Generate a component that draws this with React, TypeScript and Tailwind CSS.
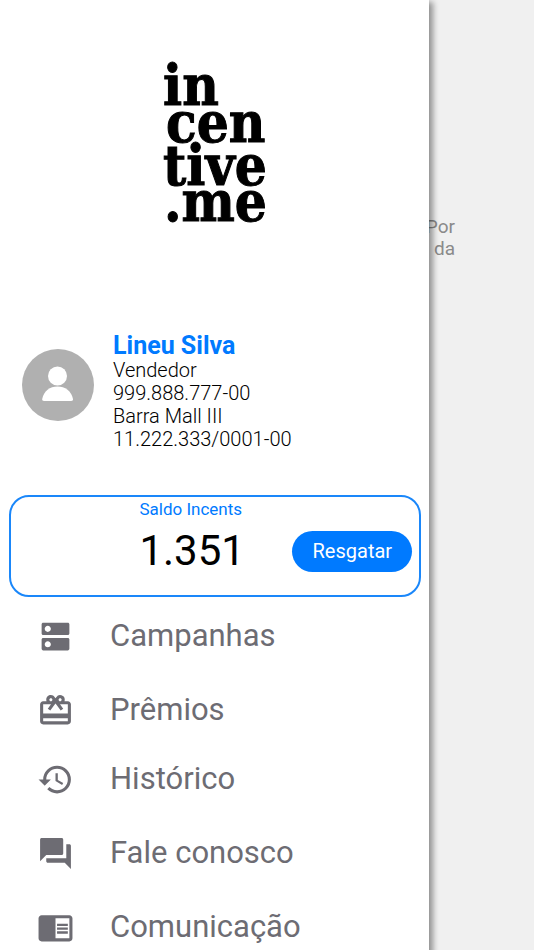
import type { IconType } from 'react-icons'
import { MdChromeReaderMode, MdDns, MdForum, MdHistory, MdRedeem } from 'react-icons/md'

interface MenuItem {
  label: string;
  icon: IconType;
}

const menuGroups: MenuItem[][] = [
  [
    { label: 'Campanhas', icon: MdDns },
    { label: 'Prêmios', icon: MdRedeem },
  ],
  [
    { label: 'Histórico', icon: MdHistory },
    { label: 'Fale conosco', icon: MdForum },
    { label: 'Comunicação', icon: MdChromeReaderMode },
  ],
]

function Logo() {
  return (
    <svg
      viewBox="0 0 104 164"
      role="img"
      aria-label="incentive.me"
      stroke="#000"
      strokeWidth="1"
      className="mx-auto h-[164px] w-[104px] overflow-visible font-['DejaVu_Serif_Condensed','DejaVu_Serif',serif] text-[56px] font-bold"
    >
      <text x="0" y="45">in</text>
      <text x="3" y="82">cen</text>
      <text x="0" y="125">tive</text>
      <text x="1" y="161">.me</text>
    </svg>
  )
}

function Avatar() {
  return (
    <svg viewBox="0 0 72 72" className="mt-4 size-[72px] shrink-0" aria-hidden="true">
      <circle cx="36" cy="36" r="36" fill="#b0b0b0" />
      <circle cx="35.5" cy="27" r="9.5" fill="#fff" />
      <path d="M22 52c-1.200 0-2-.9-1.800-2C21.700 42 28 37.500 35.500 37.500s14 4.500 15.500 12.500c.2 1.100-.6 2-1.800 2z" fill="#fff" />
    </svg>
  )
}

function Profile() {
  return (
    <section className="mt-[109px] flex items-start gap-[19px] px-[22px]">
      <Avatar />
      <div className="text-xl leading-[23px] font-light text-black">
        <h1 className="text-[25px] leading-[26px] font-bold text-[#007aff]">Lineu Silva</h1>
        <p>Vendedor</p>
        <p>999.888.777-00</p>
        <p>Barra Mall III</p>
        <p>11.222.333/0001-00</p>
      </div>
    </section>
  )
}

function Balance() {
  return (
    <section className="mt-11 mr-2 ml-[9px] grid h-[102px] grid-cols-[32%_1fr_auto] content-start items-center rounded-[20px] border-2 border-[#1a87fa] pr-[7px]">
      <h2 className="col-span-2 col-start-2 text-[17px] leading-[25px] text-[#007aff]">Saldo Incents</h2>
      <p className="col-start-2 text-[42px] leading-[58px] text-black">1.351</p>
      <button className="h-[41px] w-[120px] rounded-full bg-[#007aff] text-xl text-white">
        Resgatar
      </button>
    </section>
  )
}

export default function App() {
  return (
    <div className="grid h-screen grid-cols-[80.4%_1fr] overflow-hidden bg-[#f0f0f0] font-[Roboto,sans-serif]">
      <aside className="z-10 col-start-1 row-start-1 bg-white pt-[60px] shadow-[3px_3px_6px_1px_rgba(0,0,0,0.4)]">
        <Logo />
        <Profile />
        <Balance />
        <nav className="mt-[5px]">
          {menuGroups.map((items) => (
            <ul key={items[0].label} className="flex flex-col gap-[5px]">
              {items.map(({ label, icon: Icon }) => (
                <li key={label}>
                  <a href="#" className="flex h-[69px] items-center gap-9 pl-[37px] text-[31px] text-[#6d6c73]">
                    <Icon className="size-[37px]" aria-hidden="true" />
                    {label}
                  </a>
                </li>
              ))}
            </ul>
          ))}
        </nav>
      </aside>
      <main className="col-span-2 col-start-1 row-start-1 pt-[216px] pr-[79px] text-right text-[19px] leading-[22px] text-[#8a8a8a]">
        <p>Por<br />da</p>
      </main>
    </div>
  )
}
